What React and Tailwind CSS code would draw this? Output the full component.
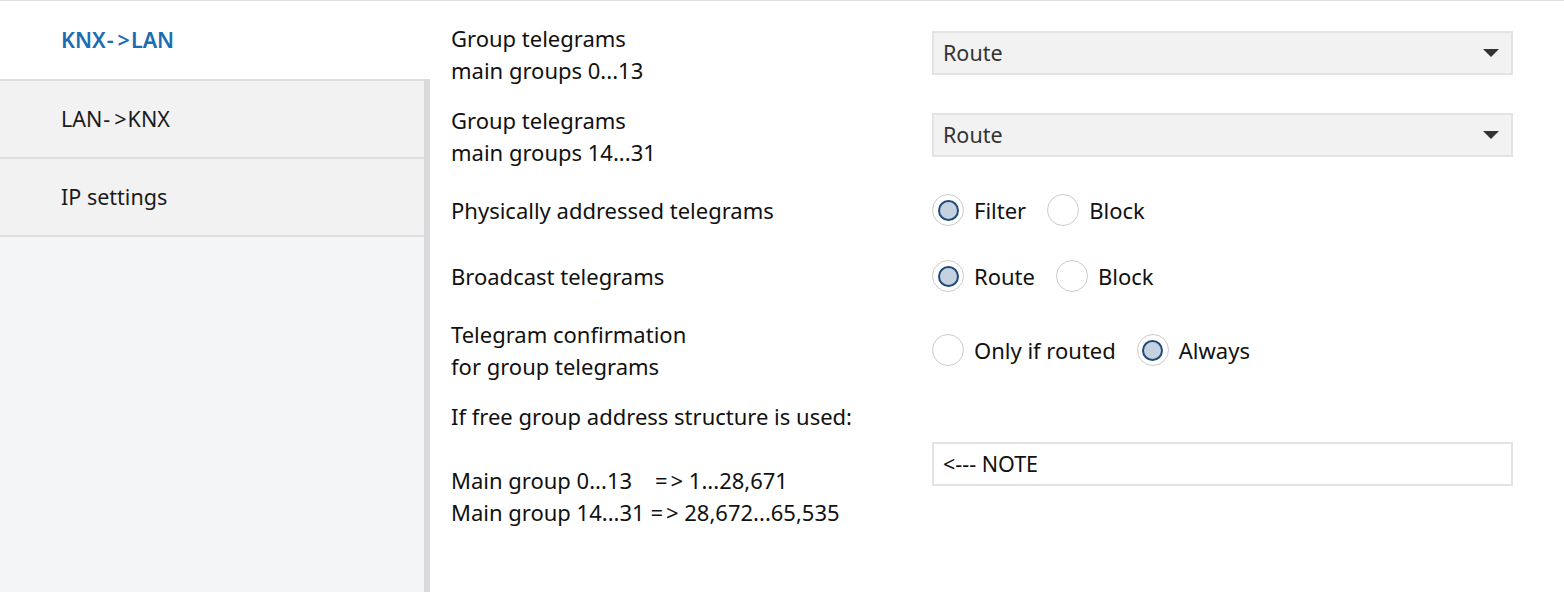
import { useState } from "react"

const font = { fontFamily: '"Noto Sans", "Segoe UI", sans-serif' }

const navItems = [
  ["KNX", "LAN"],
  ["LAN", "KNX"],
  ["IP settings"],
]

function NavLabel({ parts }) {
  if (parts.length === 1) return parts[0]
  return (
    <>
      {parts[0]}
      <span className="ml-[1px] mr-[4px]">-</span>
      <span className="mr-[1px]">&gt;</span>
      {parts[1]}
    </>
  )
}

const Arrow = () => (
  <>
    <span className="mr-[3px]">=</span>&gt;
  </>
)

function Radio({ checked, label, onClick }) {
  return (
    <button type="button" onClick={onClick} className="mr-[21px] flex items-center gap-[10px]">
      <span className="flex h-[32px] w-[32px] items-center justify-center rounded-full border-[1.5px] border-[#cbcbcb] bg-white">
        {checked && <span className="h-[21px] w-[21px] rounded-full border-2 border-[#1e4a7a] bg-[#c5d1df]" />}
      </span>
      <span className="text-[22px] text-[#111]">{label}</span>
    </button>
  )
}

function RadioGroup({ options, value, onChange }) {
  return (
    <div className="flex items-center">
      {options.map((option) => (
        <Radio key={option} label={option} checked={value === option} onClick={() => onChange(option)} />
      ))}
    </div>
  )
}

function Dropdown({ value }) {
  return (
    <div className="flex h-[44px] items-center justify-between border-2 border-[#e3e3e3] bg-[#f2f2f2] pl-[9px] pr-[12px]">
      <span className="text-[#333]">{value}</span>
      <svg width="16" height="9" viewBox="0 0 16 9">
        <path d="M0 0 L16 0 L8 8 Z" fill="#333" />
      </svg>
    </div>
  )
}

function Row({ label, children, className = "items-center" }) {
  return (
    <div className={`flex ${className}`}>
      <div className="w-[481px] shrink-0 text-[22px] leading-[32px]">{label}</div>
      <div className="w-[581px]">{children}</div>
    </div>
  )
}

export default function App() {
  const [active, setActive] = useState(0)
  const [physical, setPhysical] = useState("Filter")
  const [broadcast, setBroadcast] = useState("Route")
  const [confirm, setConfirm] = useState("Always")

  return (
    <div style={font} className="flex h-[592px] w-[1564px] overflow-hidden border-t border-[#e0e0e0] bg-white text-[21.5px] text-[#111]">
      <aside className="flex w-[430px] shrink-0 flex-col">
        {navItems.map((parts, index) => (
          <div key={parts.join()} className="flex">
            <button
              type="button"
              onClick={() => setActive(index)}
              className={`flex h-[78px] flex-1 items-center pl-[61px] text-left ${
                index === active
                  ? "bg-white font-semibold text-[#1a6db2]"
                  : "border-t-2 border-[#dedede] bg-[#f2f2f2] text-[#1a1a1a]"
              }`}
            >
              <NavLabel parts={parts} />
            </button>
            {index !== active && <div className="w-[6px] bg-[#dadadc]" />}
          </div>
        ))}
        <div className="flex flex-1">
          <div className="flex-1 border-t-2 border-[#dedede] bg-[#f4f5f7]" />
          <div className="w-[6px] bg-[#dadadc]" />
        </div>
      </aside>

      <main className="flex flex-col gap-[18px] pl-[21px] pt-[21px]">
        <Row label={<>Group telegrams<br />main groups 0...13</>} className="items-start">
          <div className="mt-[9px]">
            <Dropdown value="Route" />
          </div>
        </Row>
        <Row label={<>Group telegrams<br />main groups 14...31</>} className="items-start">
          <div className="mt-[9px]">
            <Dropdown value="Route" />
          </div>
        </Row>
        <Row label="Physically addressed telegrams" className="h-[48px] items-center">
          <RadioGroup options={["Filter", "Block"]} value={physical} onChange={setPhysical} />
        </Row>
        <Row label="Broadcast telegrams" className="h-[48px] items-center">
          <RadioGroup options={["Route", "Block"]} value={broadcast} onChange={setBroadcast} />
        </Row>
        <Row label={<>Telegram confirmation<br />for group telegrams</>}>
          <RadioGroup options={["Only if routed", "Always"]} value={confirm} onChange={setConfirm} />
        </Row>
        <Row
          label={
            <>
              If free group address structure is used:
              <br />
              <br />
              Main group 0...13&nbsp;&nbsp;&nbsp; <Arrow /> 1...28,671
              <br />
              Main group 14...31 <Arrow /> 28,672...65,535
            </>
          }
        >
          <div className="flex h-[44px] items-center border-2 border-[#e3e3e3] bg-white pl-[9px] text-[#111]">
            &lt;--- NOTE
          </div>
        </Row>
      </main>
    </div>
  )
}
